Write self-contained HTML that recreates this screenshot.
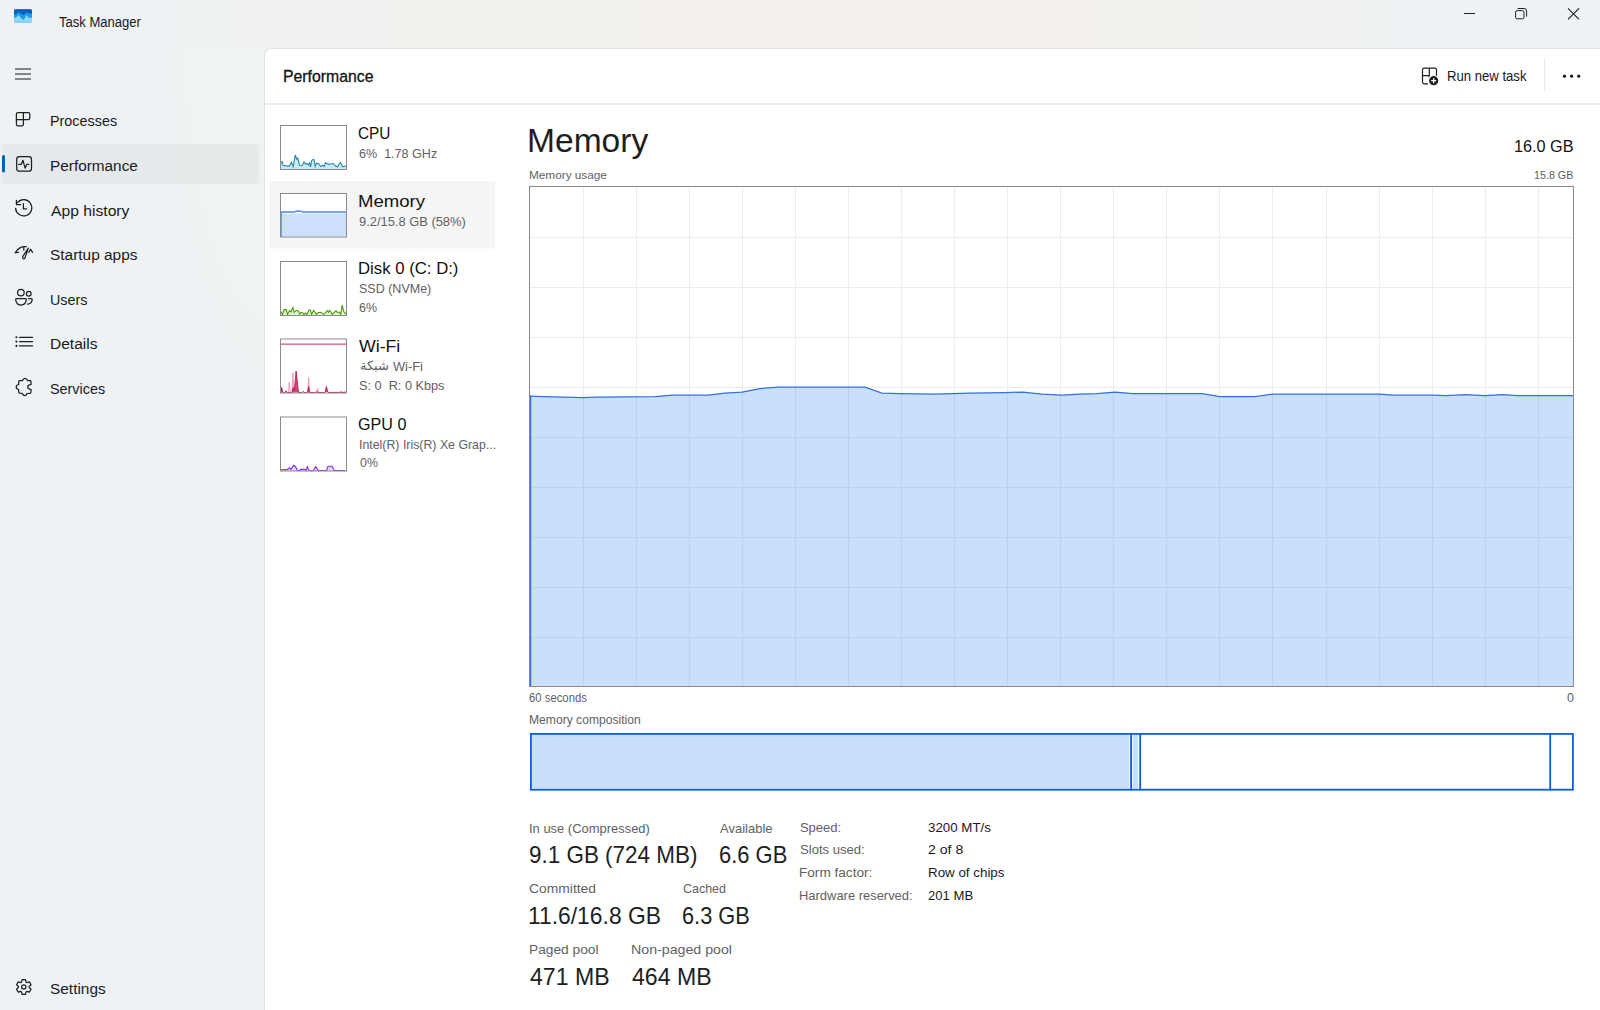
<!DOCTYPE html>
<html><head><meta charset="utf-8"><style>
html,body{margin:0;padding:0;}
body{width:1600px;height:1010px;position:relative;overflow:hidden;background:#eef2f5;font-family:"Liberation Sans",sans-serif;}
.abs{position:absolute;}
.t{position:absolute;white-space:pre;line-height:1;transform-origin:0 0;}
#sbglow{position:absolute;left:0;top:0;width:264px;height:1010px;background:radial-gradient(ellipse 210px 560px at 290px 60px,rgba(241,243,242,0.9) 0%,rgba(241,243,242,0.6) 45%,rgba(241,243,242,0) 100%);}
#title{position:absolute;left:0;top:0;width:1600px;height:48px;background:linear-gradient(90deg,#eef2f5 0px,#eef2f4 120px,#f0f1f0 300px,#f2f1ed 520px,#f4f0ec 850px,#f3f0ed 1050px,#f1f1ef 1220px,#eff2f4 1420px,#eef2f5 1600px);}
#panel{position:absolute;left:264px;top:48px;width:1340px;height:970px;background:#fff;border-left:1px solid #dfe2e3;border-top:1px solid #e0e2e1;border-top-left-radius:8px;box-sizing:border-box;}
#hdrline{position:absolute;left:265px;top:103px;width:1335px;height:1.5px;background:#ececec;}
</style></head><body>
<div id="sbglow"></div>
<div id="title"></div>
<div id="panel"></div>
<div id="hdrline"></div>
<svg class="abs" style="left:0;top:0" width="1600" height="1010" viewBox="0 0 1600 1010">
<rect x="269" y="181" width="226" height="67.5" fill="#f5f5f5"/>
<rect x="280" y="125" width="67" height="45" fill="#fff"/>
<rect x="280" y="193" width="67" height="44.5" fill="#fff"/>
<rect x="280" y="261" width="67" height="54.5" fill="#fff"/>
<rect x="280" y="338.5" width="67" height="55" fill="#fff"/>
<rect x="280" y="416.5" width="67" height="55" fill="#fff"/>
<path d="M280.6,163.0 L282.0,161.6 L283.1,165.2 L289.1,166.3 L291.5,162.2 L293.1,166.8 L295.3,154.8 L296.7,159.2 L297.8,158.1 L299.4,165.2 L302.1,165.5 L304.0,161.9 L305.7,164.1 L306.5,163.3 L308.4,164.9 L309.5,163.0 L310.6,166.8 L311.7,160.3 L313.6,159.2 L314.4,161.4 L315.2,166.3 L316.3,163.3 L318.5,163.5 L320.6,166.5 L322.8,165.2 L324.2,166.3 L325.5,162.5 L328.3,164.4 L333.2,163.5 L335.9,166.3 L337.5,166.8 L338.6,164.9 L340.5,162.5 L342.7,166.8 L344.6,166.3 L346.2,166.3 L346.2,169 L280.6,169 Z" fill="#c6ebf7"/>
<path d="M280.6,163.0 L282.0,161.6 L283.1,165.2 L289.1,166.3 L291.5,162.2 L293.1,166.8 L295.3,154.8 L296.7,159.2 L297.8,158.1 L299.4,165.2 L302.1,165.5 L304.0,161.9 L305.7,164.1 L306.5,163.3 L308.4,164.9 L309.5,163.0 L310.6,166.8 L311.7,160.3 L313.6,159.2 L314.4,161.4 L315.2,166.3 L316.3,163.3 L318.5,163.5 L320.6,166.5 L322.8,165.2 L324.2,166.3 L325.5,162.5 L328.3,164.4 L333.2,163.5 L335.9,166.3 L337.5,166.8 L338.6,164.9 L340.5,162.5 L342.7,166.8 L344.6,166.3 L346.2,166.3" fill="none" stroke="#2a88a6" stroke-width="1.1"/>
<rect x="281" y="213.5" width="65" height="23" fill="#cce0fc"/>
<path d="M281.0,212.0 L294.5,212.0 L296.0,211.2 L301.0,211.2 L302.5,212.0 L346.0,212.0" fill="none" stroke="#4f88e6" stroke-width="1.4"/>
<line x1="281" y1="212" x2="281" y2="237" stroke="#2f72e0" stroke-width="1.2"/>
<path d="M280.5,311.0 L282.5,314.4 L284.1,309.6 L286.3,309.6 L287.5,314.4 L289.5,310.5 L291.1,311.9 L292.9,307.4 L294.0,312.3 L296.2,310.3 L298.5,311.2 L299.8,314.1 L301.0,312.3 L302.5,312.8 L303.9,314.4 L305.5,313.0 L307.0,314.4 L309.1,309.9 L310.4,310.1 L311.6,314.4 L313.6,310.3 L316.3,314.4 L317.6,312.8 L320.8,312.3 L324.0,314.4 L327.3,310.5 L328.5,312.3 L329.6,310.3 L332.5,314.4 L333.9,312.6 L336.1,310.5 L337.0,312.3 L339.5,312.3 L340.6,314.4 L342.2,305.1 L343.8,311.7 L346.0,314.1 L346,315 L280.5,315 Z" fill="#def6c8"/>
<path d="M280.5,311.0 L282.5,314.4 L284.1,309.6 L286.3,309.6 L287.5,314.4 L289.5,310.5 L291.1,311.9 L292.9,307.4 L294.0,312.3 L296.2,310.3 L298.5,311.2 L299.8,314.1 L301.0,312.3 L302.5,312.8 L303.9,314.4 L305.5,313.0 L307.0,314.4 L309.1,309.9 L310.4,310.1 L311.6,314.4 L313.6,310.3 L316.3,314.4 L317.6,312.8 L320.8,312.3 L324.0,314.4 L327.3,310.5 L328.5,312.3 L329.6,310.3 L332.5,314.4 L333.9,312.6 L336.1,310.5 L337.0,312.3 L339.5,312.3 L340.6,314.4 L342.2,305.1 L343.8,311.7 L346.0,314.1" fill="none" stroke="#4b9414" stroke-width="1.05"/>
<line x1="281" y1="344.2" x2="346" y2="344.2" stroke="#d9527f" stroke-width="1.3"/>
<path d="M288.5,392.5 L289.3,382.3 L290.2,392.5" fill="none" stroke="#e58fb0" stroke-width="0.9"/><path d="M292.0,392.5 L292.9,372.8 L293.8,392.5" fill="none" stroke="#e58fb0" stroke-width="0.9"/><path d="M307.8,392.5 L308.6,377.6 L309.4,392.5" fill="none" stroke="#e58fb0" stroke-width="0.9"/><path d="M316.8,392.5 L317.5,388.0 L318.2,392.5" fill="none" stroke="#e58fb0" stroke-width="0.9"/>
<path d="M281.0,392.5 L281.6,387.4 L283.0,392.5 L285.0,392.5 L286.0,390.8 L287.0,392.5 L292.0,392.5 L293.2,387.5 L294.3,391.0 L296.1,371.0 L298.5,392.5 L302.0,392.5 L303.0,391.3 L304.0,392.5 L307.5,392.5 L308.6,386.5 L309.7,392.5 L315.0,392.5 L317.0,391.8 L318.5,392.5 L325.0,392.5 L326.4,386.5 L328.0,392.5 L340.0,392.5 L341.0,391.8 L342.0,392.5 L345.0,392.5 L346.0,391.8" fill="#d24677" stroke="#c4185a" stroke-width="0.9"/>
<path d="M280.5,469.8 L287.0,469.6 L289.5,467.8 L291.0,469.6 L293.5,465.3 L295.6,466.7 L297.4,470.5 L300.0,470.5 L300.5,469.4 L305.0,469.4 L306.2,470.5 L307.3,466.7 L309.1,470.3 L311.3,470.7 L313.6,470.5 L315.6,466.7 L318.5,470.7 L321.7,470.5 L326.6,470.5 L328.0,466.2 L332.0,466.2 L334.3,470.5 L336.6,470.5 L340.2,470.5 L345.6,470.7 L345.6,471 L280.5,471 Z" fill="#ead8fb"/>
<path d="M280.5,469.8 L287.0,469.6 L289.5,467.8 L291.0,469.6 L293.5,465.3 L295.6,466.7 L297.4,470.5 L300.0,470.5 L300.5,469.4 L305.0,469.4 L306.2,470.5 L307.3,466.7 L309.1,470.3 L311.3,470.7 L313.6,470.5 L315.6,466.7 L318.5,470.7 L321.7,470.5 L326.6,470.5 L328.0,466.2 L332.0,466.2 L334.3,470.5 L336.6,470.5 L340.2,470.5 L345.6,470.7" fill="none" stroke="#8b2ff0" stroke-width="1.15"/>
<rect x="280.5" y="125.5" width="66" height="44" fill="none" stroke="#8b8b8b" stroke-width="1"/><rect x="280.5" y="193.5" width="66" height="43.5" fill="none" stroke="#8b8b8b" stroke-width="1"/><rect x="280.5" y="261.5" width="66" height="54" fill="none" stroke="#8b8b8b" stroke-width="1"/><rect x="280.5" y="339.0" width="66" height="54" fill="none" stroke="#8b8b8b" stroke-width="1"/><rect x="280.5" y="417.0" width="66" height="54" fill="none" stroke="#8b8b8b" stroke-width="1"/>
</svg>
<svg class="abs" style="left:0;top:0" width="1600" height="1010" viewBox="0 0 1600 1010">
<rect x="530" y="186" width="1043" height="500" fill="#ffffff"/>
<g stroke="#ececec" stroke-width="1"><line x1="583.5" y1="186" x2="583.5" y2="686"/><line x1="636.5" y1="186" x2="636.5" y2="686"/><line x1="689.5" y1="186" x2="689.5" y2="686"/><line x1="742.5" y1="186" x2="742.5" y2="686"/><line x1="795.5" y1="186" x2="795.5" y2="686"/><line x1="848.5" y1="186" x2="848.5" y2="686"/><line x1="901.5" y1="186" x2="901.5" y2="686"/><line x1="954.5" y1="186" x2="954.5" y2="686"/><line x1="1007.5" y1="186" x2="1007.5" y2="686"/><line x1="1060.5" y1="186" x2="1060.5" y2="686"/><line x1="1113.5" y1="186" x2="1113.5" y2="686"/><line x1="1166.5" y1="186" x2="1166.5" y2="686"/><line x1="1219.5" y1="186" x2="1219.5" y2="686"/><line x1="1272.5" y1="186" x2="1272.5" y2="686"/><line x1="1326.5" y1="186" x2="1326.5" y2="686"/><line x1="1379.5" y1="186" x2="1379.5" y2="686"/><line x1="1432.5" y1="186" x2="1432.5" y2="686"/><line x1="1485.5" y1="186" x2="1485.5" y2="686"/><line x1="1538.5" y1="186" x2="1538.5" y2="686"/><line x1="530" y1="237.5" x2="1573" y2="237.5"/><line x1="530" y1="287.5" x2="1573" y2="287.5"/><line x1="530" y1="337.5" x2="1573" y2="337.5"/><line x1="530" y1="387.5" x2="1573" y2="387.5"/><line x1="530" y1="437.5" x2="1573" y2="437.5"/><line x1="530" y1="487.5" x2="1573" y2="487.5"/><line x1="530" y1="537.5" x2="1573" y2="537.5"/><line x1="530" y1="587.5" x2="1573" y2="587.5"/><line x1="530" y1="637.5" x2="1573" y2="637.5"/></g>
<path d="M530.0,396.1 L544.0,396.6 L583.0,397.6 L597.0,397.1 L655.0,396.6 L673.0,395.1 L708.0,395.1 L725.0,393.1 L742.0,392.1 L760.0,388.6 L778.0,387.1 L865.0,387.1 L882.0,393.1 L900.0,393.6 L935.0,394.1 L970.0,393.1 L1005.0,392.6 L1023.0,392.1 L1042.0,394.1 L1062.0,395.1 L1080.0,394.1 L1097.0,393.6 L1115.0,392.1 L1133.0,393.6 L1202.0,393.6 L1220.0,396.6 L1255.0,396.6 L1273.0,394.1 L1379.0,394.1 L1393.0,395.1 L1432.0,395.1 L1447.0,395.6 L1465.0,394.6 L1485.0,395.6 L1503.0,394.6 L1518.0,395.6 L1573.0,395.6 L1573,686 L530,686 Z" fill="#cadffb" />
<g stroke="#b9d1f2" stroke-width="1" clip-path="url(#cl)"><line x1="583.5" y1="186" x2="583.5" y2="686"/><line x1="636.5" y1="186" x2="636.5" y2="686"/><line x1="689.5" y1="186" x2="689.5" y2="686"/><line x1="742.5" y1="186" x2="742.5" y2="686"/><line x1="795.5" y1="186" x2="795.5" y2="686"/><line x1="848.5" y1="186" x2="848.5" y2="686"/><line x1="901.5" y1="186" x2="901.5" y2="686"/><line x1="954.5" y1="186" x2="954.5" y2="686"/><line x1="1007.5" y1="186" x2="1007.5" y2="686"/><line x1="1060.5" y1="186" x2="1060.5" y2="686"/><line x1="1113.5" y1="186" x2="1113.5" y2="686"/><line x1="1166.5" y1="186" x2="1166.5" y2="686"/><line x1="1219.5" y1="186" x2="1219.5" y2="686"/><line x1="1272.5" y1="186" x2="1272.5" y2="686"/><line x1="1326.5" y1="186" x2="1326.5" y2="686"/><line x1="1379.5" y1="186" x2="1379.5" y2="686"/><line x1="1432.5" y1="186" x2="1432.5" y2="686"/><line x1="1485.5" y1="186" x2="1485.5" y2="686"/><line x1="1538.5" y1="186" x2="1538.5" y2="686"/><line x1="530" y1="237.5" x2="1573" y2="237.5"/><line x1="530" y1="287.5" x2="1573" y2="287.5"/><line x1="530" y1="337.5" x2="1573" y2="337.5"/><line x1="530" y1="387.5" x2="1573" y2="387.5"/><line x1="530" y1="437.5" x2="1573" y2="437.5"/><line x1="530" y1="487.5" x2="1573" y2="487.5"/><line x1="530" y1="537.5" x2="1573" y2="537.5"/><line x1="530" y1="587.5" x2="1573" y2="587.5"/><line x1="530" y1="637.5" x2="1573" y2="637.5"/></g>
<clipPath id="cl"><path d="M530.0,396.1 L544.0,396.6 L583.0,397.6 L597.0,397.1 L655.0,396.6 L673.0,395.1 L708.0,395.1 L725.0,393.1 L742.0,392.1 L760.0,388.6 L778.0,387.1 L865.0,387.1 L882.0,393.1 L900.0,393.6 L935.0,394.1 L970.0,393.1 L1005.0,392.6 L1023.0,392.1 L1042.0,394.1 L1062.0,395.1 L1080.0,394.1 L1097.0,393.6 L1115.0,392.1 L1133.0,393.6 L1202.0,393.6 L1220.0,396.6 L1255.0,396.6 L1273.0,394.1 L1379.0,394.1 L1393.0,395.1 L1432.0,395.1 L1447.0,395.6 L1465.0,394.6 L1485.0,395.6 L1503.0,394.6 L1518.0,395.6 L1573.0,395.6 L1573,686 L530,686 Z"/></clipPath>
<path d="M530.0,396.1 L544.0,396.6 L583.0,397.6 L597.0,397.1 L655.0,396.6 L673.0,395.1 L708.0,395.1 L725.0,393.1 L742.0,392.1 L760.0,388.6 L778.0,387.1 L865.0,387.1 L882.0,393.1 L900.0,393.6 L935.0,394.1 L970.0,393.1 L1005.0,392.6 L1023.0,392.1 L1042.0,394.1 L1062.0,395.1 L1080.0,394.1 L1097.0,393.6 L1115.0,392.1 L1133.0,393.6 L1202.0,393.6 L1220.0,396.6 L1255.0,396.6 L1273.0,394.1 L1379.0,394.1 L1393.0,395.1 L1432.0,395.1 L1447.0,395.6 L1465.0,394.6 L1485.0,395.6 L1503.0,394.6 L1518.0,395.6 L1573.0,395.6" fill="none" stroke="#3272dc" stroke-width="1.25"/>
<line x1="530.6" y1="395.5" x2="530.6" y2="686" stroke="#3272dc" stroke-width="1.25"/>
<rect x="529.5" y="186.5" width="1044" height="500" fill="none" stroke="#8a8a8a" stroke-width="1"/>
</svg>
<svg class="abs" style="left:0;top:0" width="1600" height="1010" viewBox="0 0 1600 1010">
<rect x="531.5" y="735" width="597.8" height="53.5" fill="#cadffb"/>
<rect x="1132.8" y="735" width="5.4" height="53.5" fill="#cadffb"/>
<g fill="none" stroke="#0b5ce0" stroke-width="1.8">
<rect x="530.9" y="733.9" width="1042" height="55.8"/>
<line x1="1131.1" y1="733" x2="1131.1" y2="790.5"/>
<line x1="1140.2" y1="733" x2="1140.2" y2="790.5"/>
<line x1="1550.2" y1="733" x2="1550.2" y2="790.5"/>
</g>
</svg>
<svg class="abs" style="left:0;top:0" width="1600" height="1010" viewBox="0 0 1600 1010">
<!-- app icon -->
<defs><clipPath id="appc"><rect x="14" y="9.3" width="18" height="13.7" rx="1.6"/></clipPath>
<linearGradient id="appg" x1="0" y1="0" x2="0" y2="1"><stop offset="0" stop-color="#b8e6fd"/><stop offset="1" stop-color="#7fd0fc"/></linearGradient></defs>
<g clip-path="url(#appc)">
<rect x="14" y="9" width="18" height="14" fill="url(#appg)"/>
<path d="M13,9 L13,18 L14,17.9 Q16.5,18 18.5,14.9 Q20.5,18 23.5,19.9 Q25,18 26.5,14.9 Q28,17.7 29.5,17.7 L33,17.7 L33,9 Z" fill="#1a9be6"/>
<path d="M13,9 L13,14.5 L14,14.5 Q16.5,14.5 18.5,12 Q20.5,14 23.5,15.3 Q25,14 26.6,12 Q28,13.5 29,13.5 L33,13.5 L33,9 Z" fill="#0b5fb8"/>
</g>
<!-- window controls -->
<g stroke="#1f1f1f" stroke-width="1" fill="none">
<line x1="1464" y1="13.5" x2="1475" y2="13.5"/>
<rect x="1515.6" y="10.6" width="8.4" height="8.2" rx="1.6"/>
<path d="M1517.6,8.5 L1524.2,8.5 Q1526.6,8.5 1526.6,10.9 L1526.6,16.6"/>
<path d="M1568,8.3 L1579,19.3 M1579,8.3 L1568,19.3" stroke-width="1.1"/>
</g>
<!-- hamburger -->
<g stroke="#2b2b2b" stroke-width="1.1">
<line x1="15" y1="69" x2="31" y2="69"/><line x1="15" y1="74" x2="31" y2="74"/><line x1="15" y1="79" x2="31" y2="79"/>
</g>
<!-- selected nav bg -->
<rect x="2" y="144" width="257" height="40" rx="4" fill="#000" fill-opacity="0.037"/>
<rect x="2" y="155" width="3" height="17.5" rx="1.5" fill="#005fb8"/>
<g stroke="#1f1f1f" stroke-width="1.25" fill="none" stroke-linejoin="round" stroke-linecap="round">
<!-- processes -->
<path d="M18,112.6 L28.2,112.6 Q29.8,112.6 29.8,114.2 L29.8,117.9 Q29.8,119.5 28.2,119.5 L23.4,119.5 L23.4,124.3 Q23.4,125.9 21.8,125.9 L18,125.9 Q16.4,125.9 16.4,124.3 L16.4,114.2 Q16.4,112.6 18,112.6 Z"/>
<path d="M16.4,119.5 L23.4,119.5 L23.4,112.6"/>
<!-- performance -->
<rect x="16.7" y="156.7" width="14.8" height="14.5" rx="2.8"/>
<path d="M18.7,164.3 L21.3,164.3 L23,160.3 L25.1,168.2 L26.9,164.3 L28.8,164.3"/>
<!-- app history -->
<path d="M17.5,202.6 A8.1,8.1 0 1 1 15.6,208.4"/>
<path d="M16.4,200.3 L16.4,204.5 L20.6,204.5"/>
<path d="M23.4,203.6 L23.4,208.9 L26.5,208.9"/>
<!-- startup -->
<path d="M15.3,252.7 Q18.5,247 24.2,246.6 L26.3,246.7"/>
<path d="M15.3,252.7 L18.4,252.4 M23.8,246.8 L23.8,250.2 M28.8,252.4 L30.5,249.2 L32.5,252.4"/>
<path d="M28.3,248.1 L22.9,256.3 Q22.1,258.7 23.7,258.9 Q25.1,258.9 25.4,256.6 Z"/>
<!-- users -->
<circle cx="20.9" cy="292.6" r="3.3"/>
<circle cx="28.75" cy="293.7" r="2.3"/>
<path d="M16.4,298.5 L25.6,298.5 Q26.4,298.5 26.3,299.6 Q25.8,305 21,305 Q16.2,305 15.7,299.6 Q15.6,298.5 16.4,298.5 Z"/>
<path d="M28.4,298.5 L31.2,298.5 Q32.3,298.6 32.2,299.8 Q31.8,303.8 27.6,304.1"/>
<!-- details -->
<path d="M19.5,337.3 L32.6,337.3 M19.5,341.6 L32.6,341.6 M19.5,345.9 L32.6,345.9"/>
<!-- services -->
<path d="M19.6,380.5 L22.5,380.5 Q23.2,378.3 25,378.3 Q26.8,378.3 27.5,380.5 L30,380.5 Q30.8,380.5 30.9,381.4 L31.1,384.4 Q27.8,384.9 27.7,387 Q27.8,389.1 31.1,389.6 L30.9,392.4 Q30.8,393.3 30,393.3 L27,393.5 Q26.4,395.6 24.7,395.6 Q23,395.6 22.4,393.5 L19.7,393.2 Q18.8,393.1 18.8,392.3 L18.6,389.5 Q16.2,389 16.2,387 Q16.2,385 18.6,384.5 L18.8,381.4 Q18.9,380.5 19.6,380.5 Z"/>
<!-- settings -->
<circle cx="23.8" cy="987" r="2.1"/>
<path d="M22.09,979.59 L25.51,979.59 L26.00,982.07 L26.97,982.63 L29.36,981.82 L31.07,984.78 L29.17,986.44 L29.17,987.56 L31.07,989.22 L29.36,992.18 L26.97,991.37 L26.00,991.93 L25.51,994.41 L22.09,994.41 L21.60,991.93 L20.63,991.37 L18.24,992.18 L16.53,989.22 L18.43,987.56 L18.43,986.44 L16.53,984.78 L18.24,981.82 L20.63,982.63 L21.60,982.07 Z"/>
</g>
<g fill="#1f1f1f">
<circle cx="16.4" cy="337.3" r="1.05"/><circle cx="16.4" cy="341.6" r="1.05"/><circle cx="16.4" cy="345.9" r="1.05"/>
</g>
<!-- run new task icon -->
<g stroke="#1f1f1f" stroke-width="1.2" fill="none" stroke-linejoin="round">
<path d="M1436.5,76 L1436.5,70 Q1436.5,68.2 1434.7,68.2 L1424.3,68.2 Q1422.5,68.2 1422.5,70 L1422.5,82 Q1422.5,83.8 1424.3,83.8 L1428,83.8"/>
<path d="M1422.5,75.7 L1429.3,75.7 M1429.3,68.2 L1429.3,78"/>
</g>
<circle cx="1433.7" cy="80.7" r="5.2" fill="#1f1f1f" stroke="#fff" stroke-width="1.2"/>
<path d="M1433.7,78.2 L1433.7,83.2 M1431.2,80.7 L1436.2,80.7" stroke="#fff" stroke-width="1.3"/>
<line x1="1544.5" y1="58" x2="1544.5" y2="92" stroke="#e9e9e9" stroke-width="1"/>
<g fill="#1a1a1a"><circle cx="1564.5" cy="76.2" r="1.6"/><circle cx="1571.6" cy="76.2" r="1.6"/><circle cx="1578.7" cy="76.2" r="1.6"/></g>
</svg>
<div class="t" style="left:59.24px;top:14.68px;font-size:14.49px;color:#1a1a1a;transform:scaleX(0.9005);">Task Manager</div>
<div class="t" style="left:50.45px;top:113.49px;font-size:15.07px;color:#1a1a1a;transform:scaleX(0.9540);">Processes</div>
<div class="t" style="left:50.37px;top:157.99px;font-size:15.07px;color:#1a1a1a;transform:scaleX(1.0189);">Performance</div>
<div class="t" style="left:50.60px;top:202.59px;font-size:15.07px;color:#1a1a1a;transform:scaleX(1.0406);">App history</div>
<div class="t" style="left:49.91px;top:247.29px;font-size:15.07px;color:#1a1a1a;transform:scaleX(1.0243);">Startup apps</div>
<div class="t" style="left:49.53px;top:291.89px;font-size:15.07px;color:#1a1a1a;transform:scaleX(0.9501);">Users</div>
<div class="t" style="left:50.36px;top:336.39px;font-size:15.07px;color:#1a1a1a;transform:scaleX(1.0313);">Details</div>
<div class="t" style="left:50.15px;top:380.89px;font-size:15.07px;color:#1a1a1a;transform:scaleX(0.9541);">Services</div>
<div class="t" style="left:50.01px;top:981.49px;font-size:15.07px;color:#1a1a1a;transform:scaleX(1.0229);">Settings</div>
<div class="t" style="left:282.54px;top:68.56px;font-size:16.52px;color:#111;transform:scaleX(0.9565);-webkit-text-stroke:0.3px #111;">Performance</div>
<div class="t" style="left:1447.45px;top:68.68px;font-size:14.49px;color:#1a1a1a;transform:scaleX(0.9058);">Run new task</div>
<div class="t" style="left:358.03px;top:124.84px;font-size:17.25px;color:#111;transform:scaleX(0.8909);">CPU</div>
<div class="t" style="left:359.37px;top:146.72px;font-size:13.62px;color:#616161;transform:scaleX(0.9228);">6%  1.78 GHz</div>
<div class="t" style="left:357.52px;top:192.94px;font-size:17.25px;color:#111;transform:scaleX(1.0759);">Memory</div>
<div class="t" style="left:359.22px;top:214.62px;font-size:13.62px;color:#616161;transform:scaleX(0.9473);">9.2/15.8 GB (58%)</div>
<div class="t" style="left:357.66px;top:260.34px;font-size:17.25px;color:#111;transform:scaleX(0.9705);">Disk 0 (C: D:)</div>
<div class="t" style="left:359.24px;top:282.02px;font-size:13.62px;color:#616161;transform:scaleX(0.9192);">SSD (NVMe)</div>
<div class="t" style="left:359.18px;top:300.62px;font-size:13.62px;color:#616161;transform:scaleX(0.9176);">6%</div>
<div class="t" style="left:358.91px;top:338.14px;font-size:17.25px;color:#111;transform:scaleX(1.0263);">Wi-Fi</div>
<div class="t" style="left:360px;top:360.2px;font-size:12.8px;color:#616161;transform:scaleX(1.0)">شبكة</div>
<div class="t" style="left:392.94px;top:359.72px;font-size:13.62px;color:#616161;transform:scaleX(0.9419);">Wi-Fi</div>
<div class="t" style="left:359.43px;top:378.72px;font-size:13.62px;color:#616161;transform:scaleX(0.9334);">S: 0  R: 0 Kbps</div>
<div class="t" style="left:358.19px;top:415.94px;font-size:17.25px;color:#111;transform:scaleX(0.9349);">GPU 0</div>
<div class="t" style="left:359.39px;top:437.72px;font-size:13.62px;color:#616161;transform:scaleX(0.9066);">Intel(R) Iris(R) Xe Grap...</div>
<div class="t" style="left:359.50px;top:456.22px;font-size:13.62px;color:#616161;transform:scaleX(0.9109);">0%</div>
<div class="t" style="left:526.81px;top:123.67px;font-size:33.33px;color:#1e1e1e;transform:scaleX(1.0071);">Memory</div>
<div class="t" style="left:1514.28px;top:137.72px;font-size:17.39px;color:#111;transform:scaleX(0.9340);">16.0 GB</div>
<div class="t" style="left:529.06px;top:169.89px;font-size:11.30px;color:#616161;transform:scaleX(1.0427);">Memory usage</div>
<div class="t" style="left:1534.19px;top:169.89px;font-size:11.30px;color:#616161;transform:scaleX(0.9496);">15.8 GB</div>
<div class="t" style="left:529.43px;top:691.53px;font-size:12.32px;color:#616161;transform:scaleX(0.9199);">60 seconds</div>
<div class="t" style="left:1566.50px;top:691.53px;font-size:12.32px;color:#616161;transform:scaleX(1.0147);">0</div>
<div class="t" style="left:529.03px;top:713.53px;font-size:12.32px;color:#616161;transform:scaleX(0.9834);">Memory composition</div>
<div class="t" style="left:528.83px;top:821.54px;font-size:13.48px;color:#616161;transform:scaleX(0.9612);">In use (Compressed)</div>
<div class="t" style="left:528.99px;top:843.79px;font-size:23.19px;color:#1e1e1e;transform:scaleX(0.9681);">9.1 GB (724 MB)</div>
<div class="t" style="left:720.00px;top:821.54px;font-size:13.48px;color:#616161;transform:scaleX(0.9657);">Available</div>
<div class="t" style="left:718.90px;top:843.79px;font-size:23.19px;color:#1e1e1e;transform:scaleX(0.9456);">6.6 GB</div>
<div class="t" style="left:529.31px;top:881.54px;font-size:13.48px;color:#616161;transform:scaleX(1.0296);">Committed</div>
<div class="t" style="left:528.29px;top:904.79px;font-size:23.19px;color:#1e1e1e;transform:scaleX(0.9853);">11.6/16.8 GB</div>
<div class="t" style="left:682.88px;top:881.54px;font-size:13.48px;color:#616161;transform:scaleX(0.9246);">Cached</div>
<div class="t" style="left:682.41px;top:904.79px;font-size:23.19px;color:#1e1e1e;transform:scaleX(0.9384);">6.3 GB</div>
<div class="t" style="left:528.90px;top:943.04px;font-size:13.48px;color:#616161;transform:scaleX(1.0189);">Paged pool</div>
<div class="t" style="left:529.54px;top:965.79px;font-size:23.19px;color:#1e1e1e;transform:scaleX(0.9967);">471 MB</div>
<div class="t" style="left:630.86px;top:943.04px;font-size:13.48px;color:#616161;transform:scaleX(1.0538);">Non-paged pool</div>
<div class="t" style="left:631.54px;top:965.79px;font-size:23.19px;color:#1e1e1e;transform:scaleX(0.9967);">464 MB</div>
<div class="t" style="left:799.91px;top:821.41px;font-size:13.04px;color:#616161;">Speed:</div>
<div class="t" style="left:928.47px;top:821.41px;font-size:13.04px;color:#1a1a1a;transform:scaleX(1.0222);">3200 MT/s</div>
<div class="t" style="left:799.91px;top:843.41px;font-size:13.04px;color:#616161;transform:scaleX(1.0042);">Slots used:</div>
<div class="t" style="left:928.29px;top:843.41px;font-size:13.04px;color:#1a1a1a;transform:scaleX(1.0816);">2 of 8</div>
<div class="t" style="left:799.41px;top:865.91px;font-size:13.04px;color:#616161;transform:scaleX(1.0438);">Form factor:</div>
<div class="t" style="left:927.93px;top:865.91px;font-size:13.04px;color:#1a1a1a;transform:scaleX(1.0250);">Row of chips</div>
<div class="t" style="left:799.46px;top:888.71px;font-size:13.04px;color:#616161;transform:scaleX(0.9928);">Hardware reserved:</div>
<div class="t" style="left:928.34px;top:888.71px;font-size:13.04px;color:#1a1a1a;transform:scaleX(1.0085);">201 MB</div>
</body></html>
